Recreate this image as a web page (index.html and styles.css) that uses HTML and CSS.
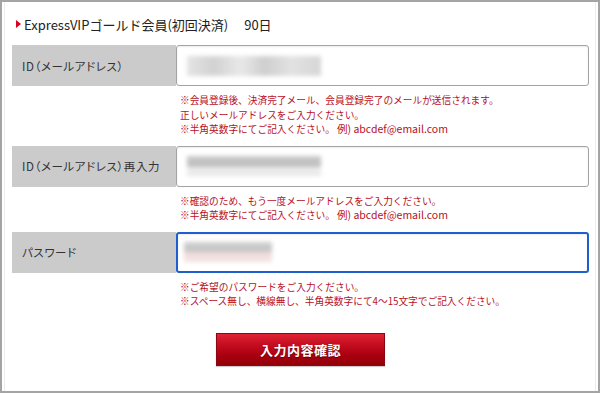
FILE: index.html
```html
<!DOCTYPE html>
<html lang="ja">
<head>
    <meta charset="UTF-8">
    <meta name="viewport" content="width=device-width, initial-scale=1.0">
    <title>ExpressVIPゴールド会員 登録</title>
    <link rel="stylesheet" href="styles.css">
</head>
<body>
    <div class="frame">
        <h2 class="plan-title">ExpressVIPゴールド会員(初回決済)<span class="days">90日</span></h2>

        <div class="form">
            <div class="form-row">
                <div class="form-label">ID（メールアドレス）</div>
                <div class="form-field">
                    <div class="input">
                        <span class="blur blur-a"></span>
                    </div>
                    <p class="note">
                        ※会員登録後、決済完了メール、会員登録完了のメールが送信されます。<br>
                        正しいメールアドレスをご入力ください。<br>
                        ※半角英数字にてご記入ください。<span class="example">例) abcdef@email.com</span>
                    </p>
                </div>
            </div>

            <div class="form-row">
                <div class="form-label">ID（メールアドレス）再入力</div>
                <div class="form-field">
                    <div class="input">
                        <span class="blur blur-b"></span>
                    </div>
                    <p class="note">
                        ※確認のため、もう一度メールアドレスをご入力ください。<br>
                        ※半角英数字にてご記入ください。<span class="example">例) abcdef@email.com</span>
                    </p>
                </div>
            </div>

            <div class="form-row">
                <div class="form-label">パスワード</div>
                <div class="form-field">
                    <div class="input focused">
                        <span class="blur blur-c"></span>
                    </div>
                    <p class="note">
                        ※ご希望のパスワードをご入力ください。<br>
                        ※スペース無し、横線無し、半角英数字にて4～15文字でご記入ください。
                    </p>
                </div>
            </div>
        </div>

        <div class="actions">
            <button class="submit-btn" type="button">入力内容確認</button>
        </div>
    </div>
</body>
</html>
```

FILE: styles.css
```css
* {
    margin: 0;
    padding: 0;
    box-sizing: border-box;
}

body {
    font-family: "Noto Sans CJK JP", "Noto Sans", sans-serif;
    background: #fff;
    color: #333;
    width: 600px;
    height: 393px;
    overflow: hidden;
}

.frame {
    height: 393px;
    border: 2px solid #a4a4a4;
    box-shadow: inset 2px 0 0 #fff, inset 3px 0 0 #ececec, inset -2px 0 0 #fff, inset -3px 0 0 #ececec;
    padding: 13px 9px 0 10px;
}

.plan-title {
    position: relative;
    font-size: 13px;
    font-weight: normal;
    color: #222;
    line-height: 20px;
    padding-left: 12px;
}

.plan-title::before {
    content: "";
    position: absolute;
    left: 4px;
    top: 5px;
    border-left: 5px solid #e0001b;
    border-top: 4px solid transparent;
    border-bottom: 4px solid transparent;
}

.days {
    margin-left: 16px;
}

.form {
    margin-top: 10px;
}

.form-row {
    display: grid;
    grid-template-columns: 164px 1fr;
    margin-bottom: 9px;
}

.form-label {
    background: #cbcbcb;
    height: 41px;
    display: flex;
    align-items: center;
    padding-left: 10px;
    font-size: 11.5px;
    font-feature-settings: "palt";
    letter-spacing: 0.6px;
    white-space: nowrap;
    color: #333;
}

.input {
    height: 41px;
    border: 1px solid #a3a3a3;
    border-radius: 3px;
    box-shadow: inset 0 1px 2px rgba(0, 0, 0, 0.08);
    background: #fff;
    display: flex;
    align-items: center;
    padding-left: 10px;
    overflow: hidden;
}

.input.focused {
    border: 2px solid #1d5fcf;
    padding-left: 6px;
}

.blur {
    display: block;
    height: 20px;
    filter: blur(2px);
}

.blur-a {
    width: 134px;
    background:
        linear-gradient(90deg, #e4e4e4 0%, #d2d2d2 20%, #e8e8e8 40%, #cfcfcf 58%, #e2e2e2 78%, #d6d6d6 100%);
}

.blur-b {
    width: 134px;
    background:
        linear-gradient(180deg, #c9c9c9 0%, #bdbdbd 55%, #f0f0f0 56%, #e6e6e6 100%);
}

.blur-c {
    width: 88px;
    background:
        linear-gradient(180deg, #cfcfcf 0%, #c4c4c4 50%, #efdcdc 51%, #f3e3e3 100%);
}

.note {
    color: #b80f1e;
    font-size: 9.7px;
    line-height: 14.5px;
    padding-left: 4px;
    margin-top: 7px;
}

.example {
    font-size: 10.5px;
    margin-left: 2px;
}

.actions {
    display: flex;
    justify-content: center;
    margin-top: 24px;
}

.submit-btn {
    width: 169px;
    height: 33px;
    border: 1px solid #8a0612;
    background: linear-gradient(180deg, #e02234 0%, #c40d20 35%, #a8000f 70%, #930009 100%);
    color: #fff;
    font-family: "Noto Sans CJK JP", sans-serif;
    font-size: 13px;
    font-weight: bold;
    letter-spacing: 0.5px;
    text-shadow: 0 1px 1px rgba(0, 0, 0, 0.4);
    box-shadow: 0 1px 1px rgba(0, 0, 0, 0.2);
    cursor: pointer;
}
```
